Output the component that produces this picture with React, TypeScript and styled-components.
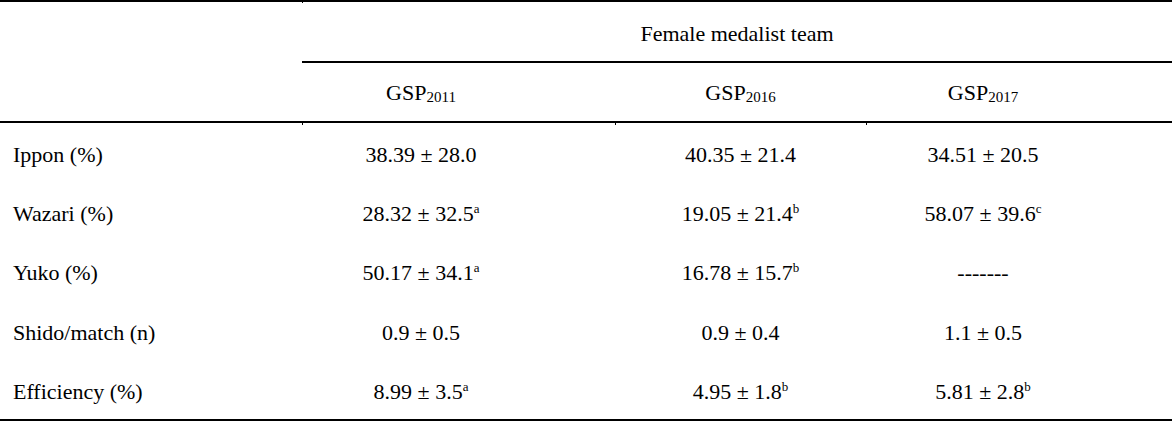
import React from "react";
import styled, { createGlobalStyle } from "styled-components";

const GlobalStyle = createGlobalStyle`
    html, body {
        margin: 0;
        padding: 0;
        background: #ffffff;
    }
    body {
        font-family: "Liberation Serif", "Times New Roman", serif;
        color: #000000;
    }
`;

const cols = "302px 313px 251px 306px";

const Table = styled.div`
    width: 1172px;
    border-top: 2px solid #000;
    border-bottom: 2px solid #000;
    font-size: 22px;
    line-height: 24px;
`;

const Head = styled.div`
    display: grid;
    grid-template-columns: 302px 1fr;
    border-bottom: 2px solid #000;
`;

const GroupCol = styled.div`
    display: flex;
    flex-direction: column;
    position: relative;
`;

const GroupTitle = styled.div`
    height: 61px;
    box-sizing: border-box;
    padding-top: 20px;
    text-align: center;
    border-bottom: 2px solid #000;
`;

const SubHead = styled.div`
    display: grid;
    grid-template-columns: 313px 251px 306px;
    height: 58px;
`;

const Row = styled.div`
    display: grid;
    grid-template-columns: ${cols};
    height: 59.2px;
`;

const Cell = styled.div<{ $padRight?: number; $top: number; $tick?: boolean }>`
    position: relative;
    box-sizing: border-box;
    padding-top: ${(p) => p.$top}px;
    padding-right: ${(p) => p.$padRight ?? 0}px;
    text-align: center;
    white-space: nowrap;

    ${(p) =>
        p.$tick &&
        `
        &::before {
            content: "";
            position: absolute;
            left: 0;
            bottom: -4px;
            width: 1px;
            height: 3px;
            background: #000;
        }
    `}
`;

const LabelCell = styled.div<{ $top: number }>`
    padding-top: ${(p) => p.$top}px;
    padding-left: 13px;
    white-space: nowrap;
`;

const Sub = styled.sub`
    font-size: 15px;
    vertical-align: -2px;
    line-height: 0;
`;

const Sup = styled.sup`
    font-size: 13px;
    vertical-align: 8px;
    line-height: 0;
`;

const Tick = styled.span<{ $x: number; $pos: "top" | "bottom" }>`
    position: absolute;
    left: ${(p) => p.$x}px;
    ${(p) => (p.$pos === "top" ? "top: -2px;" : "bottom: -5px;")}
    width: 1px;
    height: 3px;
    background: #000;
`;

type Val = { v: string; s?: string };

const rows: { label: string; vals: Val[] }[] = [
    {
        label: "Ippon (%)",
        vals: [{ v: "38.39 ± 28.0" }, { v: "40.35 ± 21.4" }, { v: "34.51 ± 20.5" }],
    },
    {
        label: "Wazari (%)",
        vals: [
            { v: "28.32 ± 32.5", s: "a" },
            { v: "19.05 ± 21.4", s: "b" },
            { v: "58.07 ± 39.6", s: "c" },
        ],
    },
    {
        label: "Yuko (%)",
        vals: [
            { v: "50.17 ± 34.1", s: "a" },
            { v: "16.78 ± 15.7", s: "b" },
            { v: "-------" },
        ],
    },
    {
        label: "Shido/match (n)",
        vals: [{ v: "0.9 ± 0.5" }, { v: "0.9 ± 0.4" }, { v: "1.1 ± 0.5" }],
    },
    {
        label: "Efficiency (%)",
        vals: [
            { v: "8.99 ± 3.5", s: "a" },
            { v: "4.95 ± 1.8", s: "b" },
            { v: "5.81 ± 2.8", s: "b" },
        ],
    },
];

const pads = [75, 0, 72];
const years = ["2011", "2016", "2017"];

const App: React.FC = () => {
    return (
        <>
            <GlobalStyle />
            <Table>
                <Head>
                    <div />
                    <GroupCol>
                        <Tick $x={0} $pos="top" />
                        <GroupTitle>Female medalist team</GroupTitle>
                        <SubHead>
                            {years.map((y, i) => (
                                <Cell key={y} $top={18} $padRight={pads[i]} $tick>
                                    GSP<Sub>{y}</Sub>
                                </Cell>
                            ))}
                        </SubHead>
                    </GroupCol>
                </Head>
                {rows.map((r) => (
                    <Row key={r.label}>
                        <LabelCell $top={20}>{r.label}</LabelCell>
                        {r.vals.map((c, i) => (
                            <Cell key={i} $top={20} $padRight={pads[i]}>
                                {c.v}
                                {c.s && <Sup>{c.s}</Sup>}
                            </Cell>
                        ))}
                    </Row>
                ))}
            </Table>
        </>
    );
};

export default App;
